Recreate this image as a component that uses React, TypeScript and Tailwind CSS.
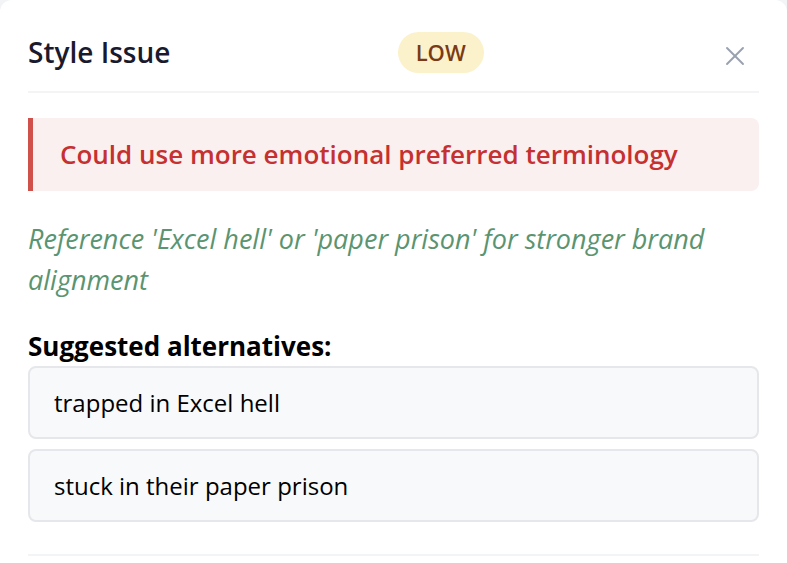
import { X } from 'lucide-react';

const alternatives = ['trapped in Excel hell', 'stuck in their paper prison'];

export default function App() {
  return (
    <div className="min-h-screen bg-gray-100" style={{ fontFamily: '"Open Sans", "Noto Sans", sans-serif' }}>
      <div className="rounded-xl bg-white px-7 pb-16">
        <div className="flex items-center justify-between border-b-2 border-gray-100 pb-[18px] pt-[31px]">
          <h2 className="text-[28px] font-semibold text-[#1a1a2e]">Style Issue</h2>
          <span className="flex h-[41px] items-center rounded-full bg-[#fbf2cb] px-[18px] text-[22px] font-semibold text-[#7c3a14]">
            LOW
          </span>
          <button className="flex h-[41px] w-12 items-center justify-center pt-[7px] text-gray-400">
            <X size={32} strokeWidth={1.4} />
          </button>
        </div>

        <div className="mt-[25px] rounded-r-lg border-l-[5px] border-[#d0504b] bg-[#faf0f0] py-[18px] pl-[27px] text-[26px] font-semibold leading-[37px] text-[#c53030]">
          Could use more emotional preferred terminology
        </div>

        <p className="mt-[27px] text-[27px] italic leading-[41px] text-[#5a9470]">
          Reference 'Excel hell' or 'paper prison' for stronger brand alignment
        </p>

        <h3 className="mt-[30px] text-[26px] font-bold leading-[32px] text-black">Suggested alternatives:</h3>

        <div className="mt-[4px] flex flex-col gap-[10px] border-b-2 border-gray-100 pb-[32px]">
          {alternatives.map((alt) => (
            <div
              key={alt}
              className="rounded-lg border-2 border-gray-200 bg-[#f8f9fa] py-[18px] pl-[24px] text-[24px] leading-[33px] text-black"
            >
              {alt}
            </div>
          ))}
        </div>
      </div>
    </div>
  );
}
